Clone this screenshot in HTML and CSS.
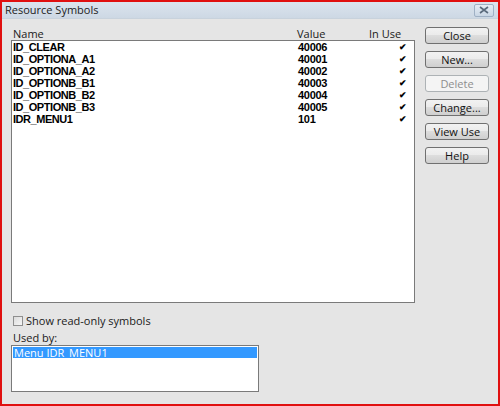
FILE: index.html
```html
<!DOCTYPE html>
<html>
<head>
<meta charset="utf-8">
<link rel="stylesheet" href="styles.css">
</head>
<body>
<div class="window">
  <div class="titlebar">
    <span class="title">Resource Symbols</span>
    <span class="xbtn"><svg width="10" height="8" viewBox="0 0 10 8"><path d="M1 1 L9 7 M9 1 L1 7" stroke="#5a6a7c" stroke-width="1.6"/></svg></span>
  </div>
  <div class="body">
    <div class="top">
      <div class="leftcol">
        <div class="header">
          <span class="h-name">Name</span>
          <span class="h-value">Value</span>
          <span class="h-inuse">In Use</span>
        </div>
        <div class="list">
          <div class="row"><span class="c-name">ID_CLEAR</span><span class="c-value">40006</span><span class="c-check">✔</span></div>
          <div class="row"><span class="c-name">ID_OPTIONA_A1</span><span class="c-value">40001</span><span class="c-check">✔</span></div>
          <div class="row"><span class="c-name">ID_OPTIONA_A2</span><span class="c-value">40002</span><span class="c-check">✔</span></div>
          <div class="row"><span class="c-name">ID_OPTIONB_B1</span><span class="c-value">40003</span><span class="c-check">✔</span></div>
          <div class="row"><span class="c-name">ID_OPTIONB_B2</span><span class="c-value">40004</span><span class="c-check">✔</span></div>
          <div class="row"><span class="c-name">ID_OPTIONB_B3</span><span class="c-value">40005</span><span class="c-check">✔</span></div>
          <div class="row"><span class="c-name">IDR_MENU1</span><span class="c-value">101</span><span class="c-check">✔</span></div>
        </div>
      </div>
      <div class="buttons">
        <div class="btn">Close</div>
        <div class="btn">New...</div>
        <div class="btn disabled">Delete</div>
        <div class="btn">Change...</div>
        <div class="btn">View Use</div>
        <div class="btn">Help</div>
      </div>
    </div>
    <div class="check-row"><span class="checkbox"></span><span>Show read-only symbols</span></div>
    <div class="usedby-label">Used by:</div>
    <div class="usedby">
      <div class="sel">Menu IDR_MENU1</div>
    </div>
  </div>
</div>
</body>
</html>
```
FILE: styles.css
```css
html, body {
  margin: 0;
  padding: 0;
}
body {
  width: 500px;
  height: 406px;
  overflow: hidden;
  font-family: "Open Sans", "Noto Sans", sans-serif;
  font-size: 11px;
  color: #1a1a1a;
}
.window {
  box-sizing: border-box;
  width: 500px;
  height: 406px;
  border: 2px solid #e01010;
  background: #e5e5e5;
  display: flex;
  flex-direction: column;
}
.titlebar {
  height: 16px;
  background: linear-gradient(#dbe4ee, #cdd8e4);
  display: flex;
  align-items: center;
  justify-content: space-between;
  padding: 0 4px 0 3px;
  border-bottom: 1px solid #c8d2dc;
}
.title {
  font-size: 11px;
  color: #222;
  line-height: 16px;
}
.xbtn {
  width: 18px;
  height: 11px;
  border: 1px solid #9fb0c4;
  border-radius: 2px;
  background: linear-gradient(#e6edf5, #c9d6e4);
  display: flex;
  align-items: center;
  justify-content: center;
}
.body {
  padding: 8px 0 0 9px;
  display: flex;
  flex-direction: column;
}
.top {
  display: flex;
  gap: 10px;
}
.leftcol {
  width: 404px;
}
.header {
  height: 13px;
  line-height: 13px;
  display: flex;
}
.h-name { padding-left: 2px; width: 284px; }
.h-value { width: 72px; }
.list {
  box-sizing: border-box;
  height: 263px;
  background: #fff;
  border: 1px solid #7a7a7a;
  padding-top: 0;
}
.row {
  display: flex;
  height: 12px;
  line-height: 12px;
  font-family: "Liberation Sans", Arial, sans-serif;
  font-weight: bold;
  font-size: 11px;
  color: #000;
}
.c-name { width: 285px; padding-left: 1px; letter-spacing: -0.45px; }
.c-value { width: 101px; letter-spacing: -0.3px; }
.c-check { font-size: 9px; font-weight: bold; }
.buttons {
  display: flex;
  flex-direction: column;
  gap: 7px;
}
.btn {
  box-sizing: border-box;
  width: 64px;
  height: 17px;
  line-height: 15px;
  text-align: center;
  border: 1px solid #707070;
  border-radius: 3px;
  background: linear-gradient(#f2f2f2 0%, #ebebeb 45%, #dddddd 50%, #cfcfcf 100%);
  color: #111;
  font-size: 11px;
}
.btn.disabled {
  color: #8e8e8e;
  border-color: #adb2b5;
  background: #f4f4f4;
}
.check-row {
  margin-top: 12px;
  display: flex;
  align-items: center;
  gap: 3px;
  line-height: 12px;
  padding-left: 2px;
}
.checkbox {
  box-sizing: border-box;
  width: 10px;
  height: 10px;
  border: 1px solid #8f8f8f;
  background: linear-gradient(135deg, #dcdcdc, #f6f6f6);
}
.usedby-label {
  margin-top: 4px;
  padding-left: 2px;
  line-height: 13px;
}
.usedby {
  box-sizing: border-box;
  margin-top: 1px;
  width: 248px;
  height: 47px;
  background: #fff;
  border: 1px solid #7a7a7a;
  padding: 1px 1px 0 1px;
}
.sel {
  background: #3399ff;
  color: #fff;
  height: 11px;
  line-height: 11px;
  padding-left: 1px;
  font-size: 11px;
}
```
